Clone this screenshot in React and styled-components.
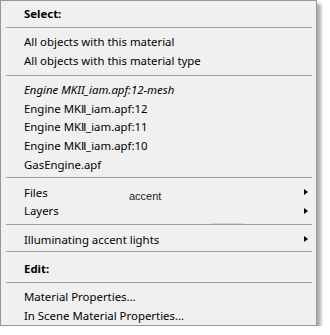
import React from "react";
import styled, { createGlobalStyle, css } from "styled-components";

const Global = createGlobalStyle`
  html, body { margin: 0; padding: 0; background: #ffffff; }
  body { font-family: "Noto Sans", "Open Sans", sans-serif; }
`;

const Menu = styled.div`
  position: relative;
  box-sizing: border-box;
  width: 317px;
  height: 326px;
  background: #f0f0f0;
  border: 1px solid #979797;
  box-shadow: 4px 4px 3px rgba(0, 0, 0, 0.32);
  padding: 2px 2px;
  display: flex;
  flex-direction: column;
  font-size: 11.4px;
  color: #000;
  & > * { flex-shrink: 0; }
`;

const Header = styled.div`
  box-sizing: border-box;
  height: ${(p) => p.$h || 20}px;
  display: flex;
  align-items: center;
  padding-left: 21px;
  font-weight: 700;
`;

const Item = styled.div`
  box-sizing: border-box;
  height: 18.75px;
  display: flex;
  align-items: center;
  justify-content: space-between;
  padding-left: 21px;
  padding-right: 6px;
  white-space: nowrap;
  ${(p) =>
    p.$italic &&
    css`
      font-style: italic;
    `}
`;

const Sep = styled.div`
  height: 1px;
  background: #a0a0a0;
  margin: ${(p) => p.$top ?? 3}px 2px ${(p) => p.$bottom ?? 5}px 3px;
`;

const Arrow = styled.span`
  width: 0;
  height: 0;
  border-top: 3.5px solid transparent;
  border-bottom: 3.5px solid transparent;
  border-left: 4px solid #000;
`;

const Accent = styled.span`
  position: absolute;
  left: 128px;
  top: 189px;
  font-family: "Liberation Sans", Arial, sans-serif;
  font-size: 11px;
  color: #222;
`;

const Glint = styled.span`
  position: absolute;
  left: 210px;
  top: 222px;
  width: 32px;
  height: 1px;
  background: #d4d4d4;
`;

export default function App() {
  return (
    <>
      <Global />
      <Menu>
        <Header>Select:</Header>
        <Sep $top={4} $bottom={4.5} />
        <Item>All objects with this material</Item>
        <Item>All objects with this material type</Item>
        <Sep $top={4.5} $bottom={4.5} />
        <Item $italic>Engine MKII_iam.apf:12-mesh</Item>
        <Item>Engine MKⅡ_iam.apf:12</Item>
        <Item>Engine MKⅡ_iam.apf:11</Item>
        <Item>Engine MKⅡ_iam.apf:10</Item>
        <Item>GasEngine.apf</Item>
        <Sep $top={3.5} $bottom={4.5} />
        <Item>
          Files
          <Arrow />
        </Item>
        <Item>
          Layers
          <Arrow />
        </Item>
        <Sep $top={3.25} $bottom={5.6} />
        <Item>
          Illuminating accent lights
          <Arrow />
        </Item>
        <Sep $top={2.6} $bottom={2} />
        <Header $h={28}>Edit:</Header>
        <Sep $top={0} $bottom={3.6} />
        <Item>Material Properties...</Item>
        <Item>In Scene Material Properties...</Item>
        <Accent>accent</Accent>
        <Glint />
      </Menu>
    </>
  );
}
